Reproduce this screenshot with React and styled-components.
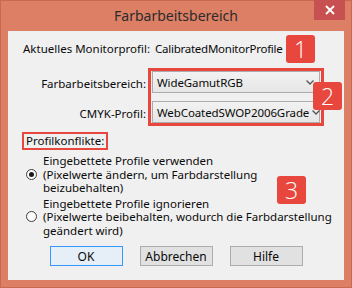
import React, { useState } from "react";
import styled, { createGlobalStyle } from "styled-components";

const GlobalStyle = createGlobalStyle`
  body {
    margin: 0;
    background: #ffffff;
  }
`;

const UI_FONT = `"Noto Sans", "Open Sans", sans-serif`;

const Window = styled.div`
  position: relative;
  width: 352px;
  height: 288px;
  box-sizing: border-box;
  background: #dc7f65;
  border: 1px solid #c8694f;
  display: flex;
  flex-direction: column;
  font-family: ${UI_FONT};
  font-size: 11.5px;
  color: #0a0a0a;
`;

const TitleBar = styled.div`
  height: 30px;
  display: flex;
  align-items: center;
  justify-content: center;
  position: relative;
`;

const Title = styled.div`
  font-size: 14px;
  color: #2b2b2b;
  margin-top: -1px;
`;

const CloseButton = styled.div`
  position: absolute;
  top: -1px;
  right: 6px;
  width: 31px;
  height: 20px;
  background: #c75050;
  display: flex;
  align-items: center;
  justify-content: center;
`;

const Body = styled.div`
  flex: 1;
  margin: 0 7px 7px 7px;
  background: #f0f0f0;
  padding: 11px 0 0 15px;
  display: flex;
  flex-direction: column;
`;

const InfoRow = styled.div`
  display: flex;
  line-height: 14px;
`;

const InfoLabel = styled.div`
  width: 132px;
`;

const InfoValue = styled.div`
  letter-spacing: -0.25px;
`;

const FormRow = styled.div`
  display: flex;
  margin-top: 12px;
`;

const LabelColumn = styled.div`
  width: 123px;
  margin-top: 5px;
  display: flex;
  flex-direction: column;
  gap: 8px;
  align-items: flex-end;
  padding-right: 2px;
`;

const FieldLabel = styled.div`
  height: 22px;
  line-height: 22px;
`;

const Highlight = styled.div`
  border: 3px solid #e8473d;
  padding: 0 1px;
  display: flex;
  flex-direction: column;
  gap: 8px;
  width: 168px;
`;

const Select = styled.div`
  height: 22px;
  box-sizing: border-box;
  border: 1px solid #acacac;
  background: linear-gradient(#f2f2f2, #e6e6e6);
  display: flex;
  align-items: center;
  justify-content: space-between;
  gap: 3px;
  padding: 0 5px 0 4px;
  font-size: 11.5px;
  letter-spacing: -0.1px;
  white-space: nowrap;
`;

const ChevronIcon = styled.svg`
  flex-shrink: 0;
`;

const SectionTitle = styled.div`
  align-self: flex-start;
  margin: 6px 0 0 -1px;
  border: 2px solid #e8473d;
  padding: 0 2px 0 2px;
  line-height: 14px;
`;

const Options = styled.div`
  display: flex;
  flex-direction: column;
  gap: 2px;
  margin: 4px 0 0 3px;
`;

const Option = styled.label`
  display: flex;
  align-items: center;
  gap: 6px;
  line-height: 13.5px;
`;

const Radio = styled.span`
  width: 11px;
  height: 11px;
  box-sizing: border-box;
  border-radius: 50%;
  border: 1px solid #3c3c3c;
  background: #fdfdfd;
  display: flex;
  align-items: center;
  justify-content: center;
  flex-shrink: 0;
  &::after {
    content: "";
    width: 5px;
    height: 5px;
    border-radius: 50%;
    background: ${({ checked }) => (checked ? "#1a1a1a" : "transparent")};
  }
`;

const ButtonRow = styled.div`
  display: flex;
  justify-content: center;
  gap: 17px;
  margin: 9px 0 0 -15px;
`;

const Button = styled.div`
  width: 73px;
  height: 20px;
  box-sizing: border-box;
  border: 1px solid ${({ primary }) => (primary ? "#3399ff" : "#adadad")};
  background: ${({ primary }) => (primary ? "#e6eef7" : "#e1e1e1")};
  display: flex;
  align-items: center;
  justify-content: center;
  font-size: 12px;
`;

const Badge = styled.div`
  position: absolute;
  left: ${({ x }) => x}px;
  top: ${({ y }) => y}px;
  width: 29px;
  height: 28px;
  border-radius: 3px;
  background: #e8473d;
  color: #ffffff;
  font-family: "Open Sans", sans-serif;
  font-size: 23px;
  font-weight: 300;
  display: flex;
  align-items: center;
  justify-content: center;
`;

const Chevron = () => (
  <ChevronIcon width="8" height="5" viewBox="0 0 8 5">
    <path d="M0.5 0.5 L4 4 L7.5 0.5" fill="none" stroke="#555" strokeWidth="1.3" />
  </ChevronIcon>
);

const App = () => {
  const [choice, setChoice] = useState("use");

  return (
    <>
      <GlobalStyle />
      <Window>
        <TitleBar>
          <Title>Farbarbeitsbereich</Title>
          <CloseButton>
            <svg width="10" height="10" viewBox="0 0 10 10">
              <path d="M1 1 L9 9 M9 1 L1 9" stroke="#fff" strokeWidth="1.8" />
            </svg>
          </CloseButton>
        </TitleBar>
        <Body>
          <InfoRow>
            <InfoLabel>Aktuelles Monitorprofil:</InfoLabel>
            <InfoValue>CalibratedMonitorProfile</InfoValue>
          </InfoRow>
          <FormRow>
            <LabelColumn>
              <FieldLabel>Farbarbeitsbereich:</FieldLabel>
              <FieldLabel>CMYK-Profil:</FieldLabel>
            </LabelColumn>
            <Highlight>
              <Select>
                <span>WideGamutRGB</span>
                <Chevron />
              </Select>
              <Select>
                <span>WebCoatedSWOP2006Grade</span>
                <Chevron />
              </Select>
            </Highlight>
          </FormRow>
          <SectionTitle>Profilkonflikte:</SectionTitle>
          <Options>
            <Option onClick={() => setChoice("use")}>
              <Radio checked={choice === "use"} />
              <div>
                Eingebettete Profile verwenden
                <br />
                (Pixelwerte ändern, um Farbdarstellung
                <br />
                beizubehalten)
              </div>
            </Option>
            <Option onClick={() => setChoice("ignore")}>
              <Radio checked={choice === "ignore"} />
              <div>
                Eingebettete Profile ignorieren
                <br />
                (Pixelwerte beibehalten, wodurch die Farbdarstellung
                <br />
                geändert wird)
              </div>
            </Option>
          </Options>
          <ButtonRow>
            <Button primary>OK</Button>
            <Button>Abbrechen</Button>
            <Button>Hilfe</Button>
          </ButtonRow>
        </Body>
        <Badge x={285} y={34}>1</Badge>
        <Badge x={312} y={81}>2</Badge>
        <Badge x={276} y={175}>3</Badge>
      </Window>
    </>
  );
};

export default App;
